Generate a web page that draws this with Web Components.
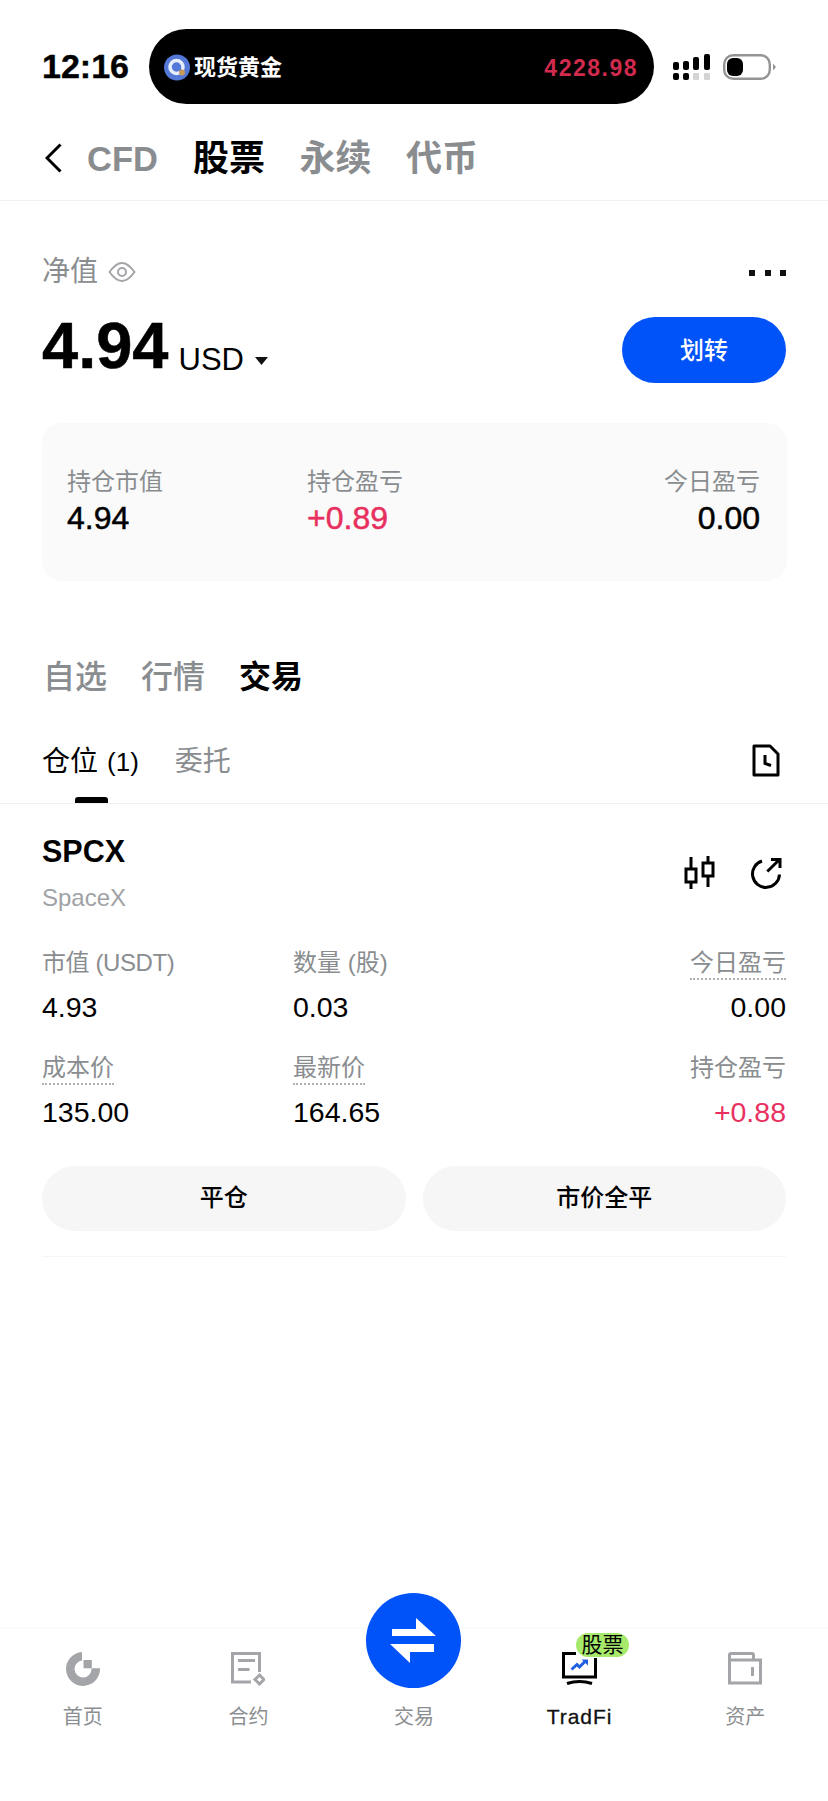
<!DOCTYPE html>
<html lang="zh-CN">
<head>
<meta charset="utf-8">
<title>TradFi</title>
<style>
  html, body { margin: 0; background: #fff; }
  body { font-family: "Liberation Sans", "Noto Sans CJK SC", sans-serif; color: #000; }
</style>
</head>
<body>
<app-shell>
  <status-bar></status-bar>
  <top-tabs></top-tabs>
  <equity-header></equity-header>
  <stat-card>
    <stat-item label="持仓市值" value="4.94"></stat-item>
    <stat-item label="持仓盈亏" value="+0.89" tone="up"></stat-item>
    <stat-item label="今日盈亏" value="0.00" align="end"></stat-item>
  </stat-card>
  <section-tabs></section-tabs>
  <sub-tabs></sub-tabs>
  <position-card symbol="SPCX" name="SpaceX">
    <field-cell label="市值 (USDT)" value="4.93" tight></field-cell>
    <field-cell label="数量 (股)" value="0.03"></field-cell>
    <field-cell label="今日盈亏" value="0.00" align="end" dotted></field-cell>
    <field-cell label="成本价" value="135.00" dotted></field-cell>
    <field-cell label="最新价" value="164.65" dotted></field-cell>
    <field-cell label="持仓盈亏" value="+0.88" align="end" tone="up"></field-cell>
    <pill-button slot="actions">平仓</pill-button>
    <pill-button slot="actions">市价全平</pill-button>
  </position-card>
  <tab-bar slot="footer">
    <nav-item label="首页">
      <svg slot="icon" width="34" height="34" viewBox="0 0 34 34" fill="#a3a5a8">
        <path d="M16 0A17 17 0 1 0 34 16.300H25.500A8.500 8.500 0 1 1 16 8.500Z"/>
        <rect x="17.500" y="8" width="8.300" height="8.300"/>
      </svg>
    </nav-item>
    <nav-item label="合约">
      <svg slot="icon" width="34" height="34" viewBox="0 0 34 34" fill="none" stroke="#a3a5a8" stroke-width="3">
        <path d="M20 30H1.500V1.500H28.500V20"/>
        <path d="M7 8.500H24M7 17.500H18.500"/>
        <path d="M28.500 23L33 27.500L28.500 32L24 27.500Z" stroke-width="3"/>
      </svg>
    </nav-item>
    <nav-item label="交易">
      <trade-fab></trade-fab>
    </nav-item>
    <nav-item label="TradFi" active badge="股票">
      <svg slot="icon" width="35" height="33" viewBox="0 0 35 33" fill="none" stroke="#000" stroke-width="3">
        <path d="M14 1.500H1.500V25H33.500V6"/>
        <path d="M5 31.500Q17.500 27.500 30 31.500"/>
        <path d="M9.500 17.500L15 12.500L17.500 15L23 9.500" stroke="#1f5fe0"/>
        <path d="M19.500 7.500H26V13.500Z" fill="#1f5fe0" stroke="none"/>
      </svg>
    </nav-item>
    <nav-item label="资产">
      <svg slot="icon" width="34" height="33" viewBox="0 0 34 33" fill="none" stroke="#a3a5a8" stroke-width="3">
        <path d="M1.500 8H32.500V31H1.500V3Q1.500 1.500 3 1.500H24Q25.500 1.500 25.500 3V8"/>
        <rect x="23" y="15" width="3" height="9" fill="#a3a5a8" stroke="none"/>
      </svg>
    </nav-item>
  </tab-bar>
</app-shell>

<script>
/* Small helper: shadow root from a template string */
class Base extends HTMLElement {
  constructor() {
    super();
    this._shadow = this.attachShadow({ mode: 'open' });
  }
  connectedCallback() {
    this._shadow.innerHTML = this.render();
  }
  attr(name, fallback = '') {
    return this.getAttribute(name) ?? fallback;
  }
}

class AppShell extends Base {
  render() {
    return `
      <style>
        :host { display: flex; flex-direction: column; height: 1801px; width: 828px; overflow: hidden; }
        .main { flex: 1; min-height: 0; }
      </style>
      <div class="main"><slot></slot></div>
      <slot name="footer"></slot>
    `;
  }
}

class StatusBar extends Base {
  render() {
    return `
      <style>
        :host { display: flex; align-items: center; height: 75px; padding: 29px 0 16px 42px; }
        .time { width: 107px; font-size: 34px; font-weight: 700; line-height: 75px; -webkit-text-stroke: .4px currentColor; }
        .pill {
          width: 505px; height: 75px; box-sizing: border-box; border-radius: 38px; background: #000;
          display: flex; align-items: center; padding: 2px 16px 0 15px; gap: 4px;
        }
        .name { color: #fff; font-size: 22px; font-weight: 700; line-height: 28px; }
        .price { margin-left: auto; color: #d02b4d; font-size: 23px; font-weight: 700; letter-spacing: 1.500px; line-height: 28px; }
        .signal { margin-left: 19px; margin-top: 1px; }
        .batt { margin-left: 12px; margin-top: 1px; }
      </style>
      <span class="time">12:16</span>
      <div class="pill">
        <svg width="26" height="27" viewBox="0 0 26 27">
          <circle cx="13" cy="13.500" r="13" fill="#5478d8"/>
          <circle cx="12.500" cy="13" r="6.500" fill="none" stroke="#e6edfb" stroke-width="3.500"/>
          <path d="M13 13l5 5" stroke="#5478d8" stroke-width="3"/>
          <circle cx="18" cy="18.500" r="3" fill="#c59a5a"/>
        </svg>
        <span class="name">现货黄金</span>
        <span class="price">4228.98</span>
      </div>
      <svg class="signal" width="38" height="27" viewBox="0 0 38 27">
        <g fill="#000">
          <rect x="0" y="8" width="6" height="8" rx="2"/>
          <rect x="10" y="7" width="6" height="9" rx="2"/>
          <rect x="20" y="3" width="6" height="13" rx="2"/>
          <rect x="31" y="0" width="6" height="16" rx="2"/>
          <rect x="0" y="19" width="6" height="7" rx="2"/>
          <rect x="10" y="19" width="6" height="7" rx="2"/>
        </g>
        <g fill="#d4d4d4">
          <rect x="20" y="19" width="6" height="7" rx="1"/>
          <rect x="31" y="19" width="6" height="7" rx="1"/>
        </g>
      </svg>
      <svg class="batt" width="54" height="26" viewBox="0 0 54 26">
        <rect x="1.200" y="1.200" width="45.600" height="23.600" rx="9" fill="#fff" stroke="#949494" stroke-width="2.400"/>
        <rect x="4" y="4" width="16" height="18" rx="6" fill="#000"/>
        <path d="M50 9.500L53 13L50 16.500Z" fill="#949494"/>
      </svg>
    `;
  }
}

class TopTabs extends Base {
  render() {
    return `
      <style>
        :host {
          display: flex; align-items: center; height: 77px; padding: 0 0 3px 45px;
          border-bottom: 1px solid #f0f0f0; box-sizing: content-box;
        }
        svg { margin-right: 25px; flex: none; margin-top: -1px; }
        .t { font-size: 36px; line-height: 46px; font-weight: 700; color: #8a8d90; margin-right: 34.500px; }
        .t.latin { font-size: 34.500px; margin-right: 35px; }
        .t.on { color: #000; }
      </style>
      <svg width="17" height="30" viewBox="0 0 17 30" fill="none" stroke="#000" stroke-width="3">
        <path d="M15.500 1.500L2 15L15.500 28.500"/>
      </svg>
      <span class="t latin">CFD</span>
      <span class="t on">股票</span>
      <span class="t">永续</span>
      <span class="t">代币</span>
    `;
  }
}

class EquityHeader extends Base {
  render() {
    return `
      <style>
        :host { display: block; padding: 56px 42px 0; }
        .top { display: flex; align-items: center; height: 30px; }
        .lbl { font-size: 28px; line-height: 30px; color: #8a8d90; }
        .eye { margin-left: 10px; }
        .more { margin-left: auto; margin-top: 2px; }
        .row { display: flex; align-items: center; justify-content: space-between; margin-top: 30px; height: 66px; }
        .amount { white-space: nowrap; line-height: 66px; margin-top: 9px; }
        .num { font-size: 65px; font-weight: 700; -webkit-text-stroke: .5px currentColor; }
        .cur { font-size: 31px; margin-left: 10px; vertical-align: -2px; }
        .caret { margin-left: 11px; vertical-align: 3px; }
        .btn {
          width: 164px; height: 66px; border-radius: 33px; background: #0052f9; color: #fff; box-sizing: border-box;
          display: flex; align-items: center; justify-content: center; font-size: 24px; font-weight: 500; padding-bottom: 4px;
        }
      </style>
      <div class="top">
        <span class="lbl">净值</span>
        <svg class="eye" width="28" height="20" viewBox="0 0 28 20" fill="none" stroke="#a3a5a8" stroke-width="2">
          <path d="M1.500 10Q8 1 14 1T26.500 10Q20 19 14 19T1.500 10Z"/>
          <circle cx="14" cy="10" r="4"/>
        </svg>
        <svg class="more" width="37" height="6" viewBox="0 0 37 6" fill="#111">
          <rect x="0" width="6" height="6"/><rect x="16" width="6" height="6"/><rect x="31" width="6" height="6"/>
        </svg>
      </div>
      <div class="row">
        <div class="amount">
          <span class="num">4.94</span><span class="cur">USD</span><svg class="caret" width="13" height="8" viewBox="0 0 13 8"><path d="M0 0H13L6.500 8Z" fill="#111"/></svg>
        </div>
        <div class="btn">划转</div>
      </div>
    `;
  }
}

class StatCard extends Base {
  render() {
    return `
      <style>
        :host {
          display: grid; grid-template-columns: 240px 1fr auto;
          margin: 40px 41px 0 42px; height: 158px; box-sizing: border-box; padding: 44px 27px 0 25px;
          background: #fafafa; border-radius: 20px;
        }
      </style>
      <slot></slot>
    `;
  }
}

class StatItem extends Base {
  render() {
    const end = this.attr('align') === 'end';
    const up = this.attr('tone') === 'up';
    return `
      <style>
        :host { display: block; text-align: ${end ? 'right' : 'left'}; }
        .l { font-size: 24px; line-height: 30px; color: #8a8d90; }
        .v { font-size: 32px; line-height: 36px; margin-top: 3px; color: ${up ? '#e8305f' : '#000'}; -webkit-text-stroke: .5px currentColor; }
      </style>
      <div class="l">${this.attr('label')}</div>
      <div class="v">${this.attr('value')}</div>
    `;
  }
}

class SectionTabs extends Base {
  render() {
    return `
      <style>
        :host { display: flex; gap: 34px; padding: 76px 43px 0; }
        span { font-size: 32px; line-height: 40px; font-weight: 500; color: #8a8d90; }
        .on { color: #000; font-weight: 700; }
      </style>
      <span>自选</span><span>行情</span><span class="on">交易</span>
    `;
  }
}

class SubTabs extends Base {
  render() {
    return `
      <style>
        :host {
          display: flex; align-items: flex-start; height: 57px; padding: 49px 48px 0 42px;
          border-bottom: 1px solid #f0f0f0; box-sizing: content-box;
        }
        .t { position: relative; font-size: 28px; line-height: 32px; color: #8a8d90; height: 57px; }
        .t.on { color: #000; margin-right: 36px; }
        .t.on::after {
          content: ''; position: absolute; left: 33px; bottom: 0; width: 33px; height: 6px;
          background: #000; border-radius: 3px 3px 0 0;
        }
        .n { font-size: 26px; margin-left: 9px; }
        svg { margin-left: auto; margin-top: -2px; }
      </style>
      <span class="t on">仓位<span class="n">(1)</span></span>
      <span class="t">委托</span>
      <svg width="28" height="33" viewBox="0 0 28 33" fill="none" stroke="#000" stroke-width="3" stroke-linejoin="round">
        <path d="M2 2H18L26 10V31H2Z"/>
        <path d="M13 11V19.500L19 21.500" stroke-linejoin="miter"/>
      </svg>
    `;
  }
}

class PositionCard extends Base {
  render() {
    return `
      <style>
        :host { display: block; padding: 29px 42px 0; }
        .head { display: flex; align-items: center; justify-content: space-between; }
        .sym { font-size: 30.500px; line-height: 36px; font-weight: 700; }
        .name { font-size: 24px; line-height: 30px; margin-top: 14px; color: #a0a2a5; }
        .icons { display: flex; align-items: center; gap: 35px; margin-right: 4px; }
        .grid { display: grid; grid-template-columns: 251px 1fr auto; row-gap: 29px; margin-top: 35px; }
        .actions { display: grid; grid-template-columns: 1fr 1fr; gap: 17px; margin-top: 37px; padding-bottom: 25px; border-bottom: 1px solid #f5f5f5; }
      </style>
      <div class="head">
        <div>
          <div class="sym">${this.attr('symbol')}</div>
          <div class="name">${this.attr('name')}</div>
        </div>
        <div class="icons">
          <svg width="32" height="34" viewBox="0 0 32 34" fill="none" stroke="#000" stroke-width="3">
            <path d="M7 1V33M24 0V31"/>
            <rect x="2" y="13" width="10" height="13" fill="#fff"/>
            <rect x="19" y="7" width="10" height="13" fill="#fff"/>
          </svg>
          <svg width="31" height="32" viewBox="0 0 31 32" fill="none" stroke="#000" stroke-width="3">
            <path d="M11 4A13.500 13.500 0 1 0 28.500 17.500"/>
            <path d="M16.300 14.500L28.500 2.500M20 2.500H29V11"/>
          </svg>
        </div>
      </div>
      <div class="grid"><slot></slot></div>
      <div class="actions"><slot name="actions"></slot></div>
    `;
  }
}

class FieldCell extends Base {
  render() {
    const end = this.attr('align') === 'end';
    const up = this.attr('tone') === 'up';
    const dotted = this.hasAttribute('dotted');
    return `
      <style>
        :host { display: block; text-align: ${end ? 'right' : 'left'}; }
        .l { font-size: 24px; line-height: 30px; color: #8a8d90; letter-spacing: ${this.hasAttribute('tight') ? '-.4px' : '0'}; }
        .dot { border-bottom: 2px dotted #aeb0b3; padding-bottom: 2px; }
        .v { font-size: 28.500px; line-height: 34px; margin-top: 12px; color: ${up ? '#e8305f' : '#000'}; }
      </style>
      <div class="l"><span class="${dotted ? 'dot' : ''}">${this.attr('label')}</span></div>
      <div class="v">${this.attr('value')}</div>
    `;
  }
}

class PillButton extends Base {
  render() {
    return `
      <style>
        :host {
          display: flex; align-items: center; justify-content: center; height: 65px; box-sizing: border-box;
          border-radius: 33px; padding-bottom: 7px;
          background: #f6f6f6; font-size: 24px; font-weight: 500; color: #000;
        }
      </style>
      <slot></slot>
    `;
  }
}

class TabBar extends Base {
  render() {
    return `
      <style>
        :host {
          display: grid; grid-template-columns: repeat(5, 1fr); height: 173px; box-sizing: content-box;
          border-top: 1px solid #fafafa; background: #fff;
        }
      </style>
      <slot></slot>
    `;
  }
}

class NavItem extends Base {
  render() {
    const active = this.hasAttribute('active');
    const badge = this.attr('badge');
    return `
      <style>
        :host { display: flex; flex-direction: column; align-items: center; padding-top: 24px; position: relative; }
        .ico { position: relative; height: 34px; display: flex; }
        .lbl {
          margin-top: 18px; font-size: ${active ? 21 : 20}px; line-height: 26px; letter-spacing: ${active ? 1 : 0}px;
          font-weight: ${active ? 500 : 400}; color: ${active ? '#111' : '#8c8e91'};
          -webkit-text-stroke: ${active ? '.3px currentColor' : '0'};
        }
        .badge {
          position: absolute; left: 14px; top: -19px; width: 53px; height: 24px; border-radius: 12px;
          background: #a6e96b; color: #000; font-size: 21px; line-height: 24px; text-align: center;
        }
      </style>
      <div class="ico">
        <slot name="icon"></slot>
        ${badge ? `<span class="badge">${badge}</span>` : ''}
      </div>
      <div class="lbl">${this.attr('label')}</div>
      <slot></slot>
    `;
  }
}

class TradeFab extends Base {
  render() {
    return `
      <style>
        /* sits over the bar's top edge */
        :host { position: absolute; left: 50%; top: -35px; margin-left: -47.500px; width: 95px; height: 95px; }
        svg { display: block; }
      </style>
      <svg width="95" height="95" viewBox="0 0 95 95">
        <circle cx="47.500" cy="47.500" r="47.500" fill="#0052f9"/>
        <path d="M26 36H50V25L70 43H26Z" fill="#fff"/>
        <path d="M68 51H24L44 70V59H68Z" fill="#fff"/>
      </svg>
    `;
  }
}

/* Register the custom elements */
customElements.define('app-shell', AppShell);
customElements.define('status-bar', StatusBar);
customElements.define('top-tabs', TopTabs);
customElements.define('equity-header', EquityHeader);
customElements.define('stat-card', StatCard);
customElements.define('stat-item', StatItem);
customElements.define('section-tabs', SectionTabs);
customElements.define('sub-tabs', SubTabs);
customElements.define('position-card', PositionCard);
customElements.define('field-cell', FieldCell);
customElements.define('pill-button', PillButton);
customElements.define('tab-bar', TabBar);
customElements.define('nav-item', NavItem);
customElements.define('trade-fab', TradeFab);
</script>
</body>
</html>
